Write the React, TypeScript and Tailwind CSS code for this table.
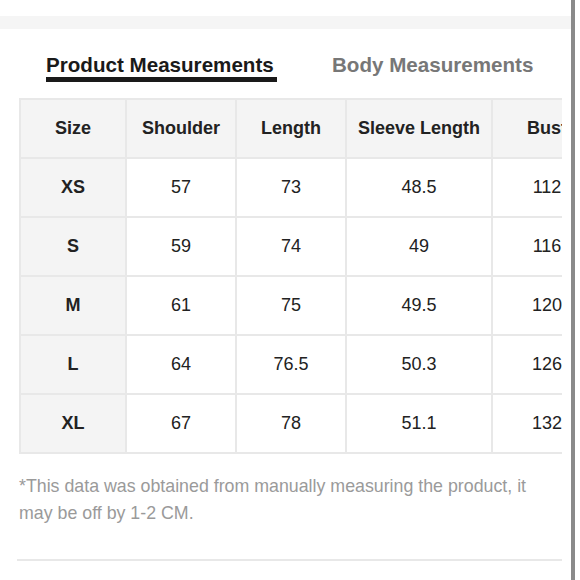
import React from "react";

const cols = [
  { w: "w-[106px]", label: "Size" },
  { w: "w-[110px]", label: "Shoulder" },
  { w: "w-[110px]", label: "Length" },
  { w: "w-[146px]", label: "Sleeve Length" },
  { w: "w-[110px]", label: "Bust" },
  { w: "w-[110px]", label: "Waist" },
];

const rows = [
  ["XS", "57", "73", "48.5", "112", "108"],
  ["S", "59", "74", "49", "116", "112"],
  ["M", "61", "75", "49.5", "120", "116"],
  ["L", "64", "76.5", "50.3", "126", "122"],
  ["XL", "67", "78", "51.1", "132", "128"],
];

export default function App() {
  return (
    <div
      className="w-[580px] h-[580px] bg-white flex overflow-hidden"
      style={{ fontFamily: '"Liberation Sans", Arial, sans-serif' }}
    >
      <div className="w-[571px] shrink-0 flex flex-col">
        <div className="h-[16px]" />
        <div className="h-[13px] bg-[#f5f5f5]" />
        <div className="flex mt-[24px]">
          <div className="ml-[46px] flex flex-col items-start">
            <div className="text-[20.6px] leading-[23px] font-bold text-[#1a1a1a]">
              Product Measurements
            </div>
            <div className="mt-[1px] h-[5px] w-[231px] bg-[#1a1a1a]" />
          </div>
          <div className="ml-[55px] text-[20.6px] leading-[23px] font-bold text-[#777777]">
            Body Measurements
          </div>
        </div>
        <div className="ml-[19px] mt-[16px] w-[543px] overflow-hidden">
          <div className="w-max border-b-2 border-[#e8e8e8]">
            <div className="flex">
              {cols.map((c) => (
                <div
                  key={c.label}
                  className={`${c.w} h-[59px] shrink-0 border-l-2 border-t-2 border-[#e8e8e8] bg-[#f4f4f4] flex items-center justify-center text-[18px] font-bold text-[#222222]`}
                >
                  {c.label}
                </div>
              ))}
            </div>
            {rows.map((r) => (
              <div key={r[0]} className="flex">
                {r.map((v, i) => (
                  <div
                    key={i}
                    className={`${cols[i].w} h-[59px] shrink-0 border-l-2 border-t-2 border-[#e8e8e8] flex items-center justify-center text-[18px] text-[#222222] ${
                      i === 0 ? "bg-[#f4f4f4] font-bold" : "bg-white"
                    }`}
                  >
                    {v}
                  </div>
                ))}
              </div>
            ))}
          </div>
        </div>
        <p className="ml-[19px] mt-[19px] w-[540px] text-[17.8px] leading-[27px] text-[#9a9a9a]">
          *This data was obtained from manually measuring the product, it may be off by 1-2 CM.
        </p>
        <div className="ml-[17px] mt-[32px] w-[545px] h-[2px] bg-[#e8e8e8]" />
      </div>
      <div className="w-[4px] shrink-0 bg-[#8a8a8a]" />
    </div>
  );
}
